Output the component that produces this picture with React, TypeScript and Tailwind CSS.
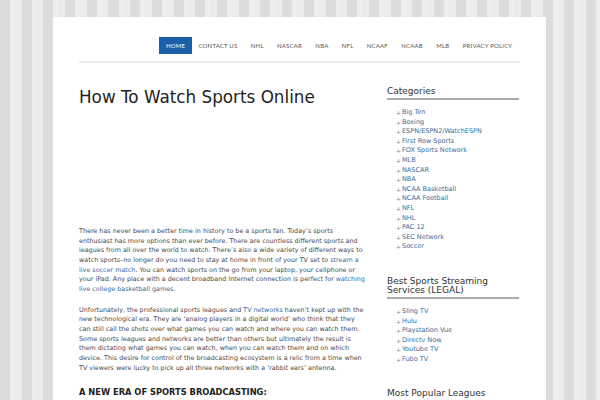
import React from "react";

const navItems = ["HOME", "CONTACT US", "NHL", "NASCAR", "NBA", "NFL", "NCAAF", "NCAAB", "MLB", "PRIVACY POLICY"];
const categories = ["Big Ten", "Boxing", "ESPN/ESPN2/WatchESPN", "First Row Sports", "FOX Sports Network", "MLB", "NASCAR", "NBA", "NCAA Basketball", "NCAA Football", "NFL", "NHL", "PAC 12", "SEC Network", "Soccer"];
const services = ["Sling TV", "Hulu", "Playstation Vue", "Directv Now", "Youtube TV", "Fubo TV"];

function Widget({ title, items }: { title: React.ReactNode; items: string[] }) {
  return (
    <div>
      <h3 className="text-[9px] leading-[9px] text-[#333] pb-[2px] border-b-2 border-[#aaaaaa]">{title}</h3>
      {items.length > 0 && (
        <ul className="mt-[8px] pl-[9px]">
          {items.map((it) => (
            <li key={it} className="flex items-center h-[9.6px] text-[6.5px] leading-[9.6px]">
              <span className="text-[#888] w-[6px] text-[6px]">+</span>
              <span className="text-[#3a6a9a]">{it}</span>
            </li>
          ))}
        </ul>
      )}
    </div>
  );
}

export default function App() {
  return (
    <div
      className="w-[600px] h-[400px] overflow-hidden bg-[repeating-linear-gradient(90deg,#dcdcdc_0px,#dcdcdc_10px,#eeeeee_10px,#eeeeee_15px,#ebebeb_15px,#ebebeb_21.7px)]"
      style={{ fontFamily: '"DejaVu Sans", sans-serif' }}
    >
      <div className="ml-[53px] mt-[17px] w-[493px] h-[383px] overflow-hidden bg-white px-[26px] pt-[20px]">
        <nav className="flex justify-end pr-[1px] border-b-2 border-[#e8ebee] pb-[7px]" style={{ fontFamily: 'Lato, "Open Sans", sans-serif' }}>
          {navItems.map((n, i) => (
            <span
              key={n}
              className={
                i === 0
                  ? "h-[17px] px-[6.7px] flex items-center bg-[#1b5fa8] text-white text-[6px] tracking-[0.2px]"
                  : "h-[17px] px-[6.7px] flex items-center text-[#555] text-[6px] tracking-[0.2px]"
              }
            >
              {n}
            </span>
          ))}
        </nav>
        <div className="flex gap-[21px] pt-[24px]">
          <main className="w-[287px] text-[6.4px] leading-[9.65px] text-[#4a4a4a]">
            <h1 className="text-[16.8px] leading-[20px] text-[#222]">How To Watch Sports Online</h1>
            <div className="h-[120px]" />
            <p>
              There has never been a better time in history to be a sports fan. Today’s sports enthusiast has more options than ever before. There are countless different sports and leagues from all over the world to watch. There’s also a wide variety of different ways to watch sports–no longer do you need to stay at home in front of your TV set to{" "}
              <span className="text-[#3a6a9a]">stream a live soccer match</span>. You can watch sports on the go from your laptop, your cellphone or your iPad. Any place with a decent broadband Internet connection is perfect for{" "}
              <span className="text-[#3a6a9a]">watching live college basketball games</span>.
            </p>
            <p className="mt-[11px]">
              Unfortunately, the professional sports leagues and <span className="text-[#3a6a9a]">TV networks</span> haven’t kept up with the new technological era. They are ‘analog players in a digital world’ who think that they can still call the shots over what games you can watch and where you can watch them. Some sports leagues and networks are better than others but ultimately the result is them dictating what games you can watch, when you can watch them and on which device. This desire for control of the broadcasting ecosystem is a relic from a time when TV viewers were lucky to pick up all three networks with a ‘rabbit ears’ antenna.
            </p>
            <h2 className="mt-[14px] text-[8.3px] leading-[10px] font-bold text-[#222]">A NEW ERA OF SPORTS BROADCASTING:</h2>
          </main>
          <aside className="w-[132px] flex flex-col">
            <Widget title="Categories" items={categories} />
            <div className="mt-[25px]">
              <Widget title={<>Best Sports Streaming<br />Services (LEGAL)</>} items={services} />
            </div>
            <div className="mt-[25px]">
              <Widget title="Most Popular Leagues" items={[]} />
            </div>
          </aside>
        </div>
      </div>
    </div>
  );
}
